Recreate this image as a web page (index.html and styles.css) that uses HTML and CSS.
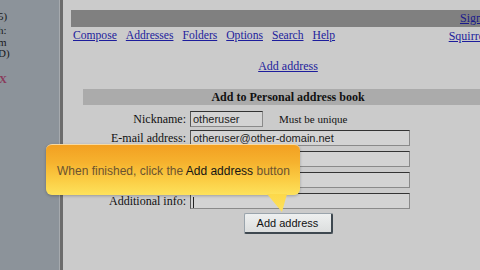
FILE: index.html
```html
<!DOCTYPE html>
<html>
<head>
<meta charset="utf-8">
<link rel="stylesheet" href="styles.css">
</head>
<body>
<div class="page">
  <div class="sidebar">
    <div class="frag f1">5)</div>
    <div class="frag f2">h:</div>
    <div class="frag f3">m</div>
    <div class="frag f4">D)</div>
    <div class="frag f5 red">X</div>
  </div>
  <div class="divider"></div>
  <div class="main">
    <div class="content">
      <div class="topbar"><a class="link">Sign Out</a></div>
      <div class="menu">
        <a class="link">Compose</a>
        <a class="link">Addresses</a>
        <a class="link">Folders</a>
        <a class="link">Options</a>
        <a class="link">Search</a>
        <a class="link">Help</a>
        <a class="link right">SquirrelMail</a>
      </div>
      <div class="center">
        <div class="addlink"><a class="link">Add address</a></div>
        <div class="form">
          <div class="formhead">Add to Personal address book</div>
          <div class="rows">
            <div class="row first">
              <div class="label">Nickname:</div>
              <div class="field"><span class="input short">otheruser</span><span class="hint">Must be unique</span></div>
            </div>
            <div class="row">
              <div class="label">E-mail address:</div>
              <div class="field"><span class="input long">otheruser@other-domain.net</span></div>
            </div>
            <div class="row">
              <div class="label">First name:</div>
              <div class="field"><span class="input long"></span></div>
            </div>
            <div class="row">
              <div class="label">Last name:</div>
              <div class="field"><span class="input long"></span></div>
            </div>
            <div class="row">
              <div class="label">Additional info:</div>
              <div class="field"><span class="input long caret"></span></div>
            </div>
          </div>
          <div class="btnrow"><span class="button">Add address</span></div>
        </div>
      </div>
    </div>
  </div>
</div>
<div class="tip">
  <div class="tiptext">When finished, click the <b>Add address</b> button</div>
</div>
<svg class="tail" width="30" height="22" viewBox="0 0 30 22">
  <defs>
    <linearGradient id="tg" x1="0" y1="0" x2="0" y2="1">
      <stop offset="0" stop-color="#fcd84a"/>
      <stop offset="1" stop-color="#fde25c"/>
    </linearGradient>
  </defs>
  <path d="M2 0 L17 18 L22 0 Z" fill="url(#tg)"/>
</svg>
</body>
</html>
```
FILE: styles.css
```css
html, body {
  margin: 0;
  padding: 0;
  width: 480px;
  height: 270px;
  overflow: hidden;
  background: #cbcbcb;
  font-family: "Liberation Serif", "Times New Roman", serif;
  font-size: 12px;
  color: #111;
  position: relative;
}

.page {
  display: flex;
  height: 270px;
}

.sidebar {
  width: 59px;
  flex-shrink: 0;
  background: #8c939a;
  position: relative;
  overflow: hidden;
}

.frag {
  position: absolute;
  left: -2px;
  font-size: 11px;
  line-height: 12px;
  color: #1a1a1a;
}
.f1 { top: 10px; }
.f2 { top: 24px; }
.f3 { top: 36px; }
.f4 { top: 47px; }
.f5 { top: 73px; left: -1px; }
.red { color: #8a3a5a; font-weight: bold; }

.divider {
  width: 3px;
  flex-shrink: 0;
  background: #6c6c6c;
  border-left: 1px solid #a6aaae;
}

.main {
  flex: 1;
  min-width: 0;
  overflow: hidden;
  padding: 10px 0 0 8px;
}

.content {
  width: 440px;
}

.link {
  color: #1d1d9c;
  text-decoration: underline;
}

.topbar {
  height: 17px;
  background: #808080;
  display: flex;
  justify-content: flex-end;
  align-items: center;
  padding-right: 8px;
}
.topbar .link { color: #1a1a8c; }

.menu {
  display: flex;
  gap: 9px;
  padding-left: 2px;
  padding-right: 1px;
  margin-top: 1px;
  line-height: 16px;
  font-size: 11.6px;
}
.menu .right { margin-left: auto; font-size: 12px; }

.center {
  padding-right: 6px;
}

.addlink {
  text-align: center;
  margin-top: 14px;
  line-height: 16px;
}

.form {
  width: 410px;
  margin: 15px auto 0;
}

.formhead {
  height: 16px;
  line-height: 16px;
  background: #ababab;
  text-align: center;
  font-weight: bold;
  font-size: 12px;
}

.rows {
  padding-top: 4px;
}

.row {
  display: grid;
  grid-template-columns: 105px 1fr;
  height: 21px;
  align-items: start;
}
.row.first { height: 19px; }

.label {
  text-align: right;
  padding-right: 2px;
  line-height: 16px;
  margin-top: 2px;
}

.field {
  display: flex;
  align-items: center;
  margin-top: 2px;
  padding-left: 2px;
}

.input {
  display: block;
  box-sizing: border-box;
  height: 16px;
  background: #d3d3d3;
  border: 1px solid #8a8a8a;
  border-top-color: #333;
  border-left-color: #555;
  font-family: "Liberation Sans", Arial, sans-serif;
  font-size: 11px;
  line-height: 14px;
  padding-left: 2px;
  color: #222;
  white-space: nowrap;
  overflow: hidden;
}
.input.short { width: 73px; }
.input.long { width: 220px; }
.input.caret::before {
  content: "";
  display: inline-block;
  width: 1px;
  height: 11px;
  background: #222;
  vertical-align: middle;
}

.hint {
  margin-left: 16px;
  font-size: 11px;
}

.btnrow {
  display: flex;
  justify-content: center;
  margin-top: 1px;
}

.button {
  display: block;
  box-sizing: border-box;
  width: 89px;
  height: 21px;
  line-height: 18px;
  text-align: center;
  font-family: "Liberation Sans", Arial, sans-serif;
  font-size: 11px;
  color: #111;
  background: linear-gradient(#eef0f0, #dcdede);
  border: 1px solid #9aa4ac;
  border-right: 2px solid #3e4850;
  border-bottom: 2px solid #3e4850;
  border-radius: 2px;
}

.tip {
  position: absolute;
  left: 46px;
  top: 144px;
  width: 254px;
  height: 51px;
  box-sizing: border-box;
  border-radius: 6px;
  background: linear-gradient(#f2a022 0%, #f6b22e 35%, #fbcd44 70%, #fde25c 100%);
  border-top: 1px solid #f8d9a0;
  box-shadow: 0 1px 3px rgba(0,0,0,0.25);
  display: flex;
  align-items: center;
  padding-left: 11px;
}

.tiptext {
  font-family: "Liberation Sans", Arial, sans-serif;
  font-size: 12px;
  color: #6b5330;
  white-space: nowrap;
  margin-top: 2px;
}
.tiptext b {
  font-weight: normal;
  color: #151515;
}

.tail {
  position: absolute;
  left: 265px;
  top: 194px;
}
```
